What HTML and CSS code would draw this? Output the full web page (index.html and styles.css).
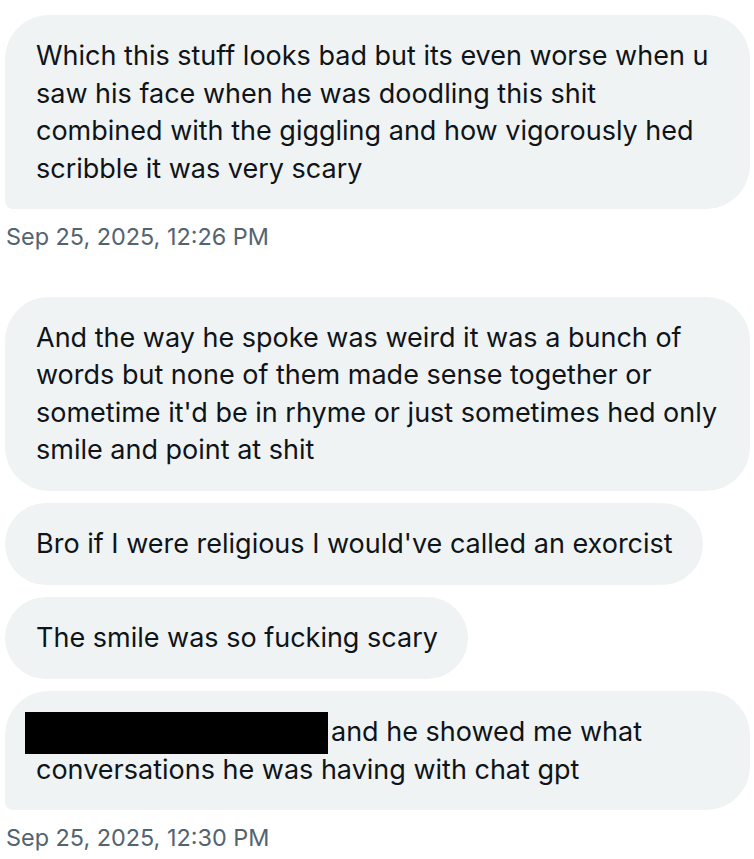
FILE: index.html
```html
<!DOCTYPE html>
<html>
<head>
<meta charset="utf-8">
<link rel="stylesheet" href="styles.css">
</head>
<body>
<div class="thread">
  <div class="group">
    <div class="bubble full last">Which this stuff looks bad but its even worse when u<br>saw his face when he was doodling this shit<br>combined with the giggling and how vigorously hed<br>scribble it was very scary</div>
    <div class="stamp">Sep 25, 2025, 12:26 PM</div>
  </div>
  <div class="group">
    <div class="bubble full">And the way he spoke was weird it was a bunch of<br>words but none of them made sense together or<br>sometime it'd be in rhyme or just sometimes hed only<br>smile and point at shit</div>
    <div class="bubble">Bro if I were religious I would've called an exorcist</div>
    <div class="bubble">The smile was so fucking scary</div>
    <div class="bubble full last"><span class="redact"></span>and he showed me what<br>conversations he was having with chat gpt</div>
    <div class="stamp">Sep 25, 2025, 12:30 PM</div>
  </div>
</div>
</body>
</html>
```

FILE: styles.css
```css
html, body {
  margin: 0;
  padding: 0;
  background: #ffffff;
}
body {
  font-family: Inter, "Noto Sans", sans-serif;
  color: #0f1419;
}
.thread {
  display: flex;
  flex-direction: column;
  gap: 45px;
  padding: 15px 4px 0 5px;
}
.group {
  display: flex;
  flex-direction: column;
  align-items: flex-start;
  gap: 12.5px;
}
.bubble {
  background: #eff3f4;
  border-radius: 44px;
  padding: 22px 30px 22px 31px;
  font-size: 27px;
  line-height: 37.5px;
  max-width: 745px;
  box-sizing: border-box;
}
.bubble.full {
  width: 745px;
}
.bubble.last {
  border-bottom-left-radius: 8px;
}
.stamp {
  font-size: 23.4px;
  line-height: 30px;
  color: #536471;
  padding-left: 1px;
}
.redact {
  display: inline-block;
  width: 303px;
  height: 42px;
  background: #000;
  vertical-align: top;
  margin: -1px 3px -6px -11px;
}
```
